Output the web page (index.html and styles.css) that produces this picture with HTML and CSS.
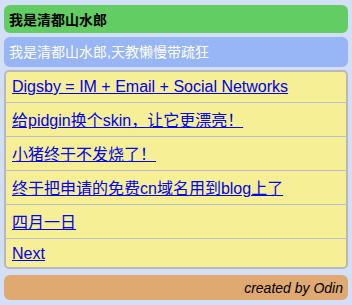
FILE: index.html
```html
<!DOCTYPE html>
<html lang="zh-CN">
<head>
  <meta charset="UTF-8">
  <title>我是清都山水郎</title>
  <link rel="stylesheet" href="styles.css">
</head>
<body>
  <div class="title">我是清都山水郎</div>
  <div class="desc">我是清都山水郎,天教懒慢带疏狂</div>
  <ul class="posts">
    <li class="first"><a href="#">Digsby = IM + Email + Social Networks</a></li>
    <li><a href="#">给pidgin换个skin，让它更漂亮！</a></li>
    <li><a href="#">小猪终于不发烧了！</a></li>
    <li><a href="#">终于把申请的免费cn域名用到blog上了</a></li>
    <li><a href="#">四月一日</a></li>
    <li class="next"><a href="#">Next</a></li>
  </ul>
  <div class="footer">created by Odin</div>
</body>
</html>
```

FILE: styles.css
```css
body {
  margin: 0;
  padding: 5px 4px 0;
  background: #d3dff8;
  font-family: "Liberation Sans", "Noto Sans CJK SC", sans-serif;
}
.title {
  background: #62cd62;
  border-radius: 6px;
  height: 28px;
  line-height: 30px;
  padding: 0 5px;
  font-size: 14px;
  font-weight: bold;
  color: #000;
}
.desc {
  background: #98b5f5;
  border-radius: 6px;
  margin-top: 4px;
  height: 30px;
  line-height: 30px;
  padding: 0 5px;
  font-size: 14px;
  color: #fff;
}
.posts {
  list-style: none;
  margin: 3px 0 0;
  padding: 0;
  background: #f6ef95;
  border: 2px solid #b9b9b9;
  border-radius: 5px;
}
.posts li {
  padding: 8px 6px 6px;
  line-height: 19px;
  font-size: 16px;
  border-bottom: 1px solid #b8bcd0;
}
.posts li.first {
  padding-top: 5px;
}
.posts li.next {
  padding: 5px 6px 4px;
  border-bottom: none;
}
.posts a {
  color: #0000ee;
}
.footer {
  background: #e0a972;
  border-radius: 6px;
  margin-top: 6px;
  height: 25px;
  line-height: 26px;
  padding: 0 5px;
  text-align: right;
  font-size: 14px;
  font-style: italic;
  color: #000;
}
```
